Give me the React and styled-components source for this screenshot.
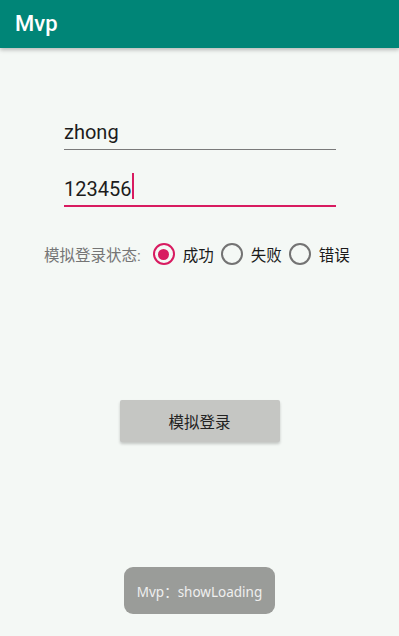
import React from "react";
import styled, { createGlobalStyle } from "styled-components";

const GlobalStyle = createGlobalStyle`
  html, body {
    margin: 0;
    padding: 0;
    background: #f4f8f5;
  }
  body {
    font-family: Roboto, "Noto Sans CJK SC", sans-serif;
  }
`;

const App = () => {
  return (
    <Screen>
      <GlobalStyle />
      <AppBar>
        <AppTitle>Mvp</AppTitle>
      </AppBar>
      <Content>
        <Form>
          <Field>
            <FieldText>zhong</FieldText>
          </Field>
          <Field focused>
            <FieldText>123456</FieldText>
            <Cursor />
          </Field>
        </Form>
        <RadioRow>
          <RadioLabel>模拟登录状态:</RadioLabel>
          <RadioOption>
            <Radio checked />
            <OptionText>成功</OptionText>
          </RadioOption>
          <RadioOption>
            <Radio />
            <OptionText>失败</OptionText>
          </RadioOption>
          <RadioOption>
            <Radio />
            <OptionText>错误</OptionText>
          </RadioOption>
        </RadioRow>
        <LoginButton>模拟登录</LoginButton>
        <Toast>Mvp：showLoading</Toast>
      </Content>
    </Screen>
  );
};

const Screen = styled.div`
  width: 399px;
  height: 636px;
  background: #f4f8f5;
  overflow: hidden;
  display: flex;
  flex-direction: column;
`;

const AppBar = styled.div`
  height: 48px;
  background: #008577;
  display: flex;
  align-items: center;
  padding: 0 15px;
  box-shadow: 0 2px 4px rgba(0, 0, 0, 0.25);
  position: relative;
  z-index: 1;
`;

const AppTitle = styled.div`
  color: #fff;
  font-family: Roboto, sans-serif;
  font-size: 22px;
  font-weight: 500;
  margin-top: -1px;
`;

const Content = styled.div`
  flex: 1;
  display: flex;
  flex-direction: column;
  align-items: center;
`;

const Form = styled.div`
  width: 272px;
  margin-top: 74px;
  margin-left: 1px;
  display: flex;
  flex-direction: column;
  gap: 29px;
`;

const Field = styled.div`
  display: flex;
  align-items: flex-start;
  height: ${(p) => (p.focused ? "26px" : "27px")};
  border-bottom: ${(p) => (p.focused ? "2px solid #d81b60" : "1.5px solid #7a7a7a")};
`;

const FieldText = styled.span`
  font-family: Roboto, sans-serif;
  font-size: 20px;
  line-height: 24px;
  margin-top: -2px;
  color: #1c1c1c;
`;

const Cursor = styled.span`
  width: 2px;
  height: 26px;
  margin-left: 1px;
  margin-top: -6px;
  background: #d81b60;
`;

const RadioRow = styled.div`
  margin-top: 35px;
  height: 24px;
  display: flex;
  align-items: center;
  white-space: nowrap;
  box-sizing: border-box;
  width: 399px;
  padding-left: 44px;
`;

const RadioLabel = styled.span`
  flex-shrink: 0;
  font-size: 15.5px;
  color: #757575;
  margin-right: 12px;
`;

const RadioOption = styled.div`
  flex-shrink: 0;
  display: flex;
  align-items: center;
  gap: 8px;
  margin-right: 7px;
`;

const Radio = styled.span`
  box-sizing: border-box;
  width: 22px;
  height: 22px;
  border-radius: 50%;
  border: 2.5px solid ${(p) => (p.checked ? "#d81b60" : "#737373")};
  display: flex;
  align-items: center;
  justify-content: center;

  &::after {
    content: "";
    width: 11px;
    height: 11px;
    border-radius: 50%;
    background: ${(p) => (p.checked ? "#d81b60" : "transparent")};
  }
`;

const OptionText = styled.span`
  font-size: 15.5px;
  color: #1a1a1a;
`;

const LoginButton = styled.div`
  margin-top: 134px;
  width: 160px;
  height: 42px;
  background: #c5c6c3;
  border-radius: 2px;
  box-shadow: 0 2px 3px rgba(0, 0, 0, 0.2);
  display: flex;
  align-items: center;
  justify-content: center;
  font-size: 15.5px;
  color: #222;
`;

const Toast = styled.div`
  margin-top: 125px;
  width: 151px;
  height: 47px;
  border-radius: 9px;
  background: #9a9c99;
  display: flex;
  align-items: center;
  justify-content: center;
  font-family: "Noto Sans", "Noto Sans CJK SC", sans-serif;
  font-size: 13.5px;
  color: #efefef;
`;

export default App;
